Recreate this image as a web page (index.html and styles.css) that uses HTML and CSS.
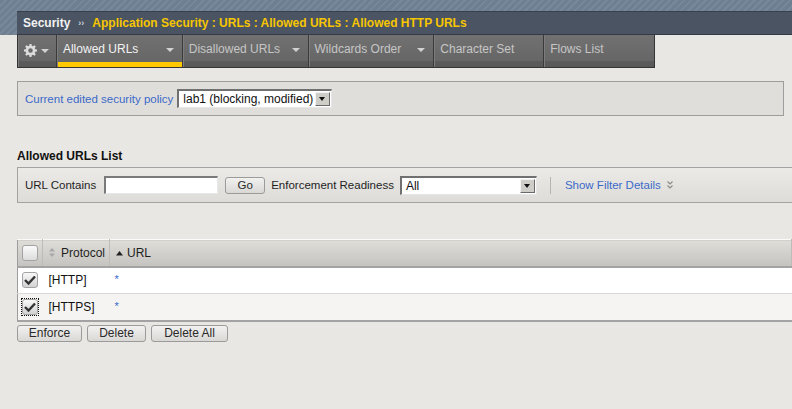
FILE: index.html
```html
<!DOCTYPE html>
<html>
<head>
<meta charset="utf-8">
<link rel="stylesheet" href="styles.css">
</head>
<body>
<div class="masthead">
  <div class="titlebar">
    <span class="t-sec">Security</span>
    <span class="t-sep">››</span>
    <span class="t-path">Application Security : URLs : Allowed URLs : Allowed HTTP URLs</span>
  </div>
</div>
<div class="tabs">
  <div class="tab tab-gear">
    <svg class="gear" width="13" height="13" viewBox="0 0 16 16"><path fill="#dcdcdc" d="M6.8 0h2.4l.4 2.2 1.3.6 1.9-1.3 1.7 1.7-1.3 1.9.6 1.3 2.2.4v2.4l-2.2.4-.6 1.3 1.3 1.9-1.7 1.7-1.9-1.3-1.3.6-.4 2.2H6.8l-.4-2.2-1.3-.6-1.9 1.3-1.7-1.7 1.3-1.9-.6-1.3L0 9.2V6.8l2.2-.4.6-1.3-1.3-1.9 1.7-1.7 1.9 1.3 1.3-.6zM8 5.2A2.8 2.8 0 1 0 8 10.8 2.8 2.8 0 1 0 8 5.2z"/></svg>
    <span class="caret"></span>
  </div>
  <div class="tab tab-wide active"><span class="tab-label">Allowed URLs</span><span class="caret"></span></div>
  <div class="tab tab-wide"><span class="tab-label">Disallowed URLs</span><span class="caret"></span></div>
  <div class="tab tab-wide"><span class="tab-label">Wildcards Order</span><span class="caret"></span></div>
  <div class="tab tab-narrow"><span class="tab-label">Character Set</span></div>
  <div class="tab tab-narrow last"><span class="tab-label">Flows List</span></div>
</div>

<div class="policy">
  <span class="policy-label">Current edited security policy</span>
  <div class="select select-policy"><span class="select-text">lab1 (blocking, modified)</span><span class="select-btn"></span></div>
</div>

<div class="list-title">Allowed URLs List</div>
<div class="filter">
  <span class="f-label">URL Contains</span>
  <span class="textbox"></span>
  <span class="btn btn-go">Go</span>
  <span class="f-label">Enforcement Readiness</span>
  <div class="select select-all"><span class="select-text">All</span><span class="select-btn"></span></div>
  <span class="vsep"></span>
  <span class="link">Show Filter Details</span>
  <svg class="dchev" width="6" height="8" viewBox="0 0 6 8"><path d="M0.5 0.5L3 3 5.5 0.5M0.5 4.5L3 7 5.5 4.5" fill="none" stroke="#8a8a8a" stroke-width="1.1"/></svg>
</div>

<table class="grid">
  <thead>
    <tr>
      <th class="c-chk"><span class="cb"></span></th>
      <th class="c-proto"><span class="sort-both"><svg width="6" height="9" viewBox="0 0 6 9"><path d="M3 0L6 3.5H0zM3 9L0 5.5h6z" fill="#a8a8a8"/></svg></span>Protocol</th>
      <th class="c-url"><svg class="sort-up" width="7" height="5" viewBox="0 0 7 5"><path d="M3.5 0L7 4.5H0z" fill="#222"/></svg>URL</th>
    </tr>
  </thead>
  <tbody>
    <tr class="odd">
      <td class="c-chk"><span class="cb checked"><svg width="12" height="10" viewBox="0 0 12 10"><path d="M1 5l3.5 3.5L11 1.5" fill="none" stroke="#333" stroke-width="2.4"/></svg></span></td>
      <td class="c-proto">[HTTP]</td>
      <td class="c-url"><span class="star">*</span></td>
    </tr>
    <tr class="even">
      <td class="c-chk"><span class="focus"><span class="cb checked"><svg width="12" height="10" viewBox="0 0 12 10"><path d="M1 5l3.5 3.5L11 1.5" fill="none" stroke="#333" stroke-width="2.4"/></svg></span></span></td>
      <td class="c-proto">[HTTPS]</td>
      <td class="c-url"><span class="star">*</span></td>
    </tr>
  </tbody>
</table>
<div class="actions">
  <span class="btn btn-enforce">Enforce</span>
  <span class="btn btn-delete">Delete</span>
  <span class="btn btn-delall">Delete All</span>
</div>
</body>
</html>
```
FILE: styles.css
```css
* { box-sizing: border-box; }
html, body { margin: 0; padding: 0; }
body {
  background: #e8e7e3;
  font-family: "Liberation Sans", Arial, sans-serif;
  font-size: 12px;
  color: #1a1a1a;
  width: 792px;
  height: 409px;
  overflow: hidden;
}
.masthead {
  padding: 11px 0 0 17px;
  background-color: #6d7f90;
  background-image: repeating-linear-gradient(135deg, #6d7f90 0, #6d7f90 3px, #76889a 3px, #76889a 5px);
}
.titlebar {
  height: 24px;
  background: #4a5462;
  border-top: 1px solid #37404b;
  border-bottom: 1px solid #333a44;
  display: flex;
  align-items: center;
  padding-left: 6px;
  font-weight: bold;
  font-size: 12px;
  white-space: nowrap;
}
.t-sec { color: #f2f2f2; }
.t-sep { color: #c9cfd6; font-size: 9px; margin: 0 8px 0 8px; }
.t-path { color: #f7c600; }

.tabs {
  display: flex;
  margin-left: 17px;
  width: 638px;
  height: 33px;
  border: 1px solid #353535;
  border-top: 0;
  background: #3c3c3c;
}
.tab {
  position: relative;
  height: 32px;
  background: linear-gradient(to bottom, #717171 0, #666 26px, #5b5b5b 26px, #585858 100%);
  border-right: 1px solid #3a3a3a;
  box-shadow: inset 1px 0 0 #7c7c7c;
  display: flex;
  align-items: flex-start;
  color: #c6c6c6;
  font-size: 12px;
}
.tab.last { border-right: 0; }
.tab-gear { width: 39px; padding: 9px 0 0 6px; }
.gear { display: block; }
.tab-wide { width: 126px; }
.tab-narrow { width: 110px; }
.tab-label { padding: 7px 0 0 6px; line-height: 14px; }
.tab.active { color: #f3f3f3; background: linear-gradient(to bottom, #717171 0, #666 27px, #ffc800 27px, #ffc800 100%); }
.caret {
  position: absolute;
  right: 8px;
  top: 13px;
  width: 0; height: 0;
  border-left: 4px solid transparent;
  border-right: 4px solid transparent;
  border-top: 4px solid #d2d2d2;
}
.tab-gear .caret { right: auto; left: 23px; top: 14px; }

.policy {
  margin: 13px 8px 0 17px;
  height: 35px;
  border: 1px solid #9d9d9d;
  background: #dfdeda;
  display: flex;
  align-items: center;
  padding-left: 7px;
  gap: 4px;
  font-size: 11.5px;
}
.policy-label { color: #3b69c9; }
.select {
  height: 19px;
  background: #fff;
  border-top: 2px solid #707070;
  border-left: 2px solid #707070;
  border-right: 1px solid #e6e6e6;
  border-bottom: 1px solid #e6e6e6;
  display: flex;
  align-items: center;
  justify-content: space-between;
  padding: 0 1px 0 4px;
}
.select-policy { width: 155px; }
.select-all { width: 137px; }
.select-text { color: #111; line-height: 14px; font-size: 12px; }
.select-btn {
  width: 15px;
  height: 14px;
  background: #cfcdc8;
  border-top: 1px solid #f4f4f4;
  border-left: 1px solid #f4f4f4;
  border-right: 1px solid #6a6a6a;
  border-bottom: 1px solid #6a6a6a;
  position: relative;
}
.select-btn::after {
  content: "";
  position: absolute;
  left: 3px; top: 4px;
  border-left: 3.5px solid transparent;
  border-right: 3.5px solid transparent;
  border-top: 4px solid #111;
}

.list-title {
  margin: 33px 0 0 17px;
  font-weight: bold;
  height: 18px;
  line-height: 14px;
  color: #111;
}
.filter {
  margin-left: 17px;
  height: 36px;
  border: 1px solid #a3a3a3;
  border-right: 0;
  background: linear-gradient(to bottom, #ebeae6, #dddcd8);
  display: flex;
  align-items: center;
  padding-left: 7px;
  white-space: nowrap;
  font-size: 11.5px;
}
.f-label { color: #1f1f1f; }
.textbox {
  width: 114px;
  height: 18px;
  margin-left: 8px;
  background: #fff;
  border-top: 2px solid #7a7a7a;
  border-left: 2px solid #7a7a7a;
  border-right: 1px solid #e8e8e8;
  border-bottom: 1px solid #e8e8e8;
}
.btn {
  display: inline-flex;
  align-items: center;
  justify-content: center;
  height: 17px;
  border: 1px solid #9b9b9b;
  border-radius: 3px;
  background: linear-gradient(to bottom, #f1f1f0, #d9d8d5);
  color: #2a2a2a;
  font-size: 12px;
}
.btn-go { width: 40px; margin: 0 6px 0 7px; font-size: 11.5px; }
.select-all { margin-left: 6px; }
.vsep { width: 1px; height: 17px; background: #b5b5b5; margin: 0 14px 0 13px; }
.link { color: #3b69c9; }
.dchev { margin-left: 6px; }

.grid {
  margin: 36px 0 0 17px;
  width: 775px;
  border-collapse: collapse;
  border-top: 1px solid #9c9c9c;
  border-bottom: 2px solid #a3a3a3;
  border-left: 1px solid #9c9c9c;
}
.grid th {
  height: 27px;
  padding: 0;
  text-align: left;
  font-weight: normal;
  color: #1e1e1e;
  background: linear-gradient(to bottom, #deddd8, #c4c3bf);
  border-top: 1px solid #fafafa;
  border-bottom: 2px solid #a3a3a3;
  border-right: 1px solid #bdbcb8;
}
.grid td {
  height: 27px;
  padding: 0;
  color: #111;
}
.grid tr.odd td { background: #fff; border-bottom: 1px solid #d9d9d9; }
.grid tr.even td { background: #f5f4f2; }
.c-chk { width: 25px; padding-left: 4px !important; }
.c-proto { width: 67px; }
th.c-proto { padding-left: 6px !important; }
td.c-proto { padding-left: 6px !important; }
th.c-url { padding-left: 6px !important; }
td.c-url { padding-left: 5px !important; }
.sort-both { display: inline-block; margin-right: 6px; }
.sort-up { margin-right: 4px; vertical-align: 1px; }
.cb {
  display: inline-flex;
  align-items: center;
  justify-content: center;
  width: 16px;
  height: 16px;
  border: 1px solid #a3a3a3;
  border-radius: 3px;
  background: linear-gradient(to bottom, #fafafa, #dcdcdc);
  vertical-align: middle;
}
.cb.checked { background: linear-gradient(to bottom, #f8f8f8, #d2d2d2); }
.focus { display: inline-block; outline: 1px dotted #111; line-height: 0; }
.star { color: #3b69c9; font-size: 11px; position: relative; top: -1px; }

.actions {
  margin: 3px 0 0 17px;
  display: flex;
  gap: 5px;
}
.btn-enforce { width: 65px; }
.btn-delete { width: 59px; }
.btn-delall { width: 77px; }
```
